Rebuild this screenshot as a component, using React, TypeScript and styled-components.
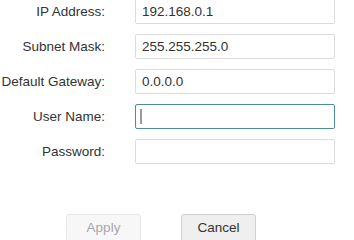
import styled, { createGlobalStyle } from "styled-components";

const GlobalStyle = createGlobalStyle`
  html, body {
    margin: 0;
    padding: 0;
    background: #ffffff;
    overflow: hidden;
  }
  body {
    font-family: "Liberation Sans", Arial, sans-serif;
    font-size: 13.5px;
    color: #333333;
  }
`;

const fields = [
  { label: "IP Address:", value: "192.168.0.1" },
  { label: "Subnet Mask:", value: "255.255.255.0" },
  { label: "Default Gateway:", value: "0.0.0.0" },
  { label: "User Name:", value: "", focused: true },
  { label: "Password:", value: "", password: true },
];

function App() {
  return (
    <Page>
      <GlobalStyle />
      <Form>
        {fields.map((f) => (
          <Row key={f.label}>
            <Label>{f.label}</Label>
            <Field>
              <Input
                type={f.password ? "password" : "text"}
                defaultValue={f.value}
                $focused={!!f.focused}
                readOnly
              />
              {f.focused && <Caret />}
            </Field>
          </Row>
        ))}
      </Form>
      <ButtonBar>
        <Button disabled>Apply</Button>
        <Button>Cancel</Button>
      </ButtonBar>
    </Page>
  );
}

const Page = styled.div`
  width: 354px;
  height: 240px;
  display: flex;
  flex-direction: column;
`;

const Form = styled.div`
  margin-top: -1px;
  display: flex;
  flex-direction: column;
  gap: 10px;
`;

const Row = styled.div`
  display: flex;
  align-items: center;
  height: 25px;
  gap: 30px;
`;

const Label = styled.div`
  width: 105px;
  text-align: right;
  white-space: nowrap;
  color: #333333;
`;

const Field = styled.div`
  position: relative;
  width: 200px;
  height: 25px;
`;

const Input = styled.input<{ $focused: boolean }>`
  box-sizing: border-box;
  width: 100%;
  height: 100%;
  margin: 0;
  padding: 0 6px;
  border: 1px solid ${(p) => (p.$focused ? "#4e8d96" : "#dcdcdc")};
  border-radius: 2px;
  background: #ffffff;
  font-family: "Liberation Sans", Arial, sans-serif;
  font-size: 13.5px;
  color: #333333;
  outline: none;
`;

const Caret = styled.span`
  position: absolute;
  left: 5px;
  top: 5px;
  width: 2px;
  height: 15px;
  background: #9a9a9a;
`;

const ButtonBar = styled.div`
  margin-top: 50px;
  padding-left: 66px;
  display: flex;
  gap: 40px;
`;

const Button = styled.button`
  box-sizing: border-box;
  width: 75px;
  height: 28px;
  padding: 0 0 2px;
  border: 1px solid #cfcfcf;
  border-radius: 3px;
  background: #efefef;
  font-family: "Liberation Sans", Arial, sans-serif;
  font-size: 13.5px;
  color: #333333;

  &:disabled {
    border-color: #e6e6e6;
    background: #f7f7f7;
    color: #a8a8a8;
  }
`;

export default App;
